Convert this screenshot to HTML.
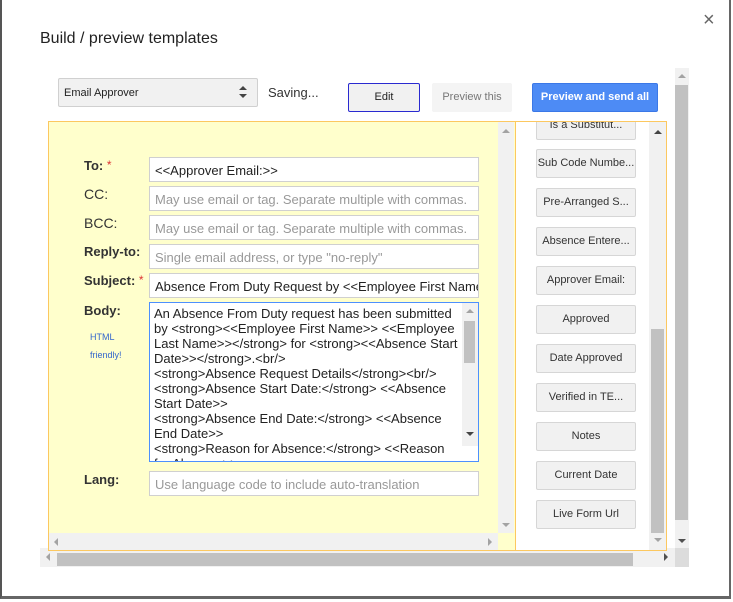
<!DOCTYPE html>
<html><head><style>
*{box-sizing:border-box;margin:0;padding:0}
body{width:733px;height:602px;background:#fff;font-family:"Liberation Sans",Arial,sans-serif;position:relative;overflow:hidden}
.abs{position:absolute}
.dlg{left:0;top:0;width:731px;height:599px;border-left:2px solid #555;border-bottom:3px solid #666;border-right:2px solid #666;background:#fff}
.lbl{position:absolute;left:84px;font-size:13px;font-weight:bold;color:#333}
.inp{position:absolute;left:149px;width:330px;height:25px;border:1px solid #d0d0d0;background:#fff;font-size:13px;color:#999;padding:5px 0 0 5px;white-space:nowrap;overflow:hidden}
.inp.v{color:#222}
.req{color:#d33;font-weight:normal;font-size:12px;vertical-align:top}
.tb{position:absolute;left:536px;width:100px;height:29px;border:1px solid #d6d6d6;background:#f1f1f1;border-radius:2px;font-size:11px;color:#333;text-align:center;line-height:27px;white-space:nowrap;overflow:hidden}
.arr{position:absolute;width:0;height:0}
</style></head><body>
<div class="abs dlg"></div>
<div class="abs" style="left:40px;top:30px;font-size:16px;color:#222">Build / preview templates</div>
<div class="abs" style="left:703px;top:9px;font-size:20px;color:#666">×</div>

<div class="abs" style="left:675px;top:68px;width:14px;height:480px;background:#f1f1f1"></div>
<div class="abs" style="left:675px;top:85px;width:13px;height:435px;background:#c1c1c1"></div>
<div class="arr" style="left:678px;top:74px;border:4px solid transparent;border-bottom:4px solid #a3a3a3;border-top:0"></div>
<div class="arr" style="left:678px;top:539px;border:4px solid transparent;border-top:4px solid #505050;border-bottom:0"></div>
<div class="abs" style="left:40px;top:548px;width:635px;height:19px;background:#f1f1f1"></div>
<div class="abs" style="left:57px;top:553px;width:576px;height:13px;background:#c1c1c1"></div>
<div class="arr" style="left:46px;top:553px;border:4px solid transparent;border-right:4px solid #a3a3a3;border-left:0"></div>
<div class="arr" style="left:664px;top:553px;border:4px solid transparent;border-left:4px solid #505050;border-right:0"></div>
<div class="abs" style="left:675px;top:548px;width:14px;height:19px;background:#dcdcdc"></div>

<div class="abs" style="left:58px;top:78px;width:200px;height:29px;background:#f1f1f1;border:1px solid #d0d0d0;border-radius:2px;font-size:11px;color:#222;padding:8px 0 0 5px">Email Approver</div>
<div class="arr" style="left:239px;top:86px;border:4px solid transparent;border-bottom:4px solid #444;border-top:0"></div>
<div class="arr" style="left:239px;top:94px;border:4px solid transparent;border-top:4px solid #444;border-bottom:0"></div>
<div class="abs" style="left:268px;top:85px;font-size:13px;color:#333">Saving...</div>
<div class="abs" style="left:348px;top:83px;width:72px;height:29px;background:#f1f1f1;border:1px solid #2a2ad0;border-radius:2px;font-size:11px;color:#222;text-align:center;line-height:27px">Edit</div>
<div class="abs" style="left:432px;top:83px;width:80px;height:29px;background:#f4f4f4;border-radius:2px;font-size:11px;color:#777;text-align:center;line-height:29px">Preview this</div>
<div class="abs" style="left:532px;top:83px;width:126px;height:29px;background:#4d8bf5;border:1px solid #3b78e7;border-radius:2px;font-size:11px;font-weight:bold;color:#fff;text-align:center;line-height:27px">Preview and send all</div>

<div class="abs" style="left:48px;top:121px;width:468px;height:430px;border:1px solid #fcc860;border-right:none;background:#ffffcc"></div>
<div class="abs" style="left:498px;top:122px;width:16px;height:411px;background:#f1f1f1"></div>
<div class="arr" style="left:502px;top:129px;border:4px solid transparent;border-bottom:4px solid #a3a3a3;border-top:0"></div>
<div class="arr" style="left:502px;top:523px;border:4px solid transparent;border-top:4px solid #a3a3a3;border-bottom:0"></div>
<div class="abs" style="left:49px;top:533px;width:449px;height:17px;background:#f1f1f1"></div>
<div class="arr" style="left:54px;top:538px;border:4px solid transparent;border-right:4px solid #a3a3a3;border-left:0"></div>
<div class="arr" style="left:488px;top:538px;border:4px solid transparent;border-left:4px solid #a3a3a3;border-right:0"></div>

<div class="lbl" style="top:158px">To: <span class="req">*</span></div>
<div class="inp v" style="top:157px">&lt;&lt;Approver Email:&gt;&gt;</div>
<div class="lbl" style="top:186px;font-weight:normal;font-size:14px">CC:</div>
<div class="inp" style="top:186px">May use email or tag. Separate multiple with commas.</div>
<div class="lbl" style="top:215px;font-weight:normal;font-size:14px">BCC:</div>
<div class="inp" style="top:215px">May use email or tag. Separate multiple with commas.</div>
<div class="lbl" style="top:244px">Reply-to:</div>
<div class="inp" style="top:244px">Single email address, or type "no-reply"</div>
<div class="lbl" style="top:273px">Subject: <span class="req">*</span></div>
<div class="inp v" style="top:273px">Absence From Duty Request by &lt;&lt;Employee First Name&gt;&gt;</div>
<div class="lbl" style="top:303px">Body:</div>
<div class="abs" style="left:90px;top:332px;font-size:9px;color:#3366cc">HTML</div>
<div class="abs" style="left:90px;top:350px;font-size:9px;color:#3366cc">friendly!</div>
<div class="abs" style="left:149px;top:302px;width:330px;height:160px;border:1px solid #4d90fe;background:#fff;overflow:hidden">
 <div style="position:absolute;left:4px;top:3px;width:305px;font-size:13px;line-height:15px;color:#222">An Absence From Duty request has been submitted by &lt;strong&gt;&lt;&lt;Employee First Name&gt;&gt; &lt;&lt;Employee Last Name&gt;&gt;&lt;/strong&gt; for &lt;strong&gt;&lt;&lt;Absence Start Date&gt;&gt;&lt;/strong&gt;.&lt;br/&gt;<br>&lt;strong&gt;Absence Request Details&lt;/strong&gt;&lt;br/&gt;<br>&lt;strong&gt;Absence Start Date:&lt;/strong&gt; &lt;&lt;Absence Start Date&gt;&gt;<br>&lt;strong&gt;Absence End Date:&lt;/strong&gt; &lt;&lt;Absence End Date&gt;&gt;<br>&lt;strong&gt;Reason for Absence:&lt;/strong&gt; &lt;&lt;Reason for Absence&gt;&gt;</div>
 <div style="position:absolute;right:0;top:0;width:16px;height:143px;background:#f1f1f1"></div>
 <div style="position:absolute;right:3px;top:18px;width:11px;height:42px;background:#c1c1c1"></div>
 <div class="arr" style="right:4px;top:6px;border:4px solid transparent;border-bottom:4px solid #a3a3a3;border-top:0"></div>
 <div class="arr" style="right:4px;top:129px;border:4px solid transparent;border-top:4px solid #444;border-bottom:0"></div>
</div>
<div class="lbl" style="top:472px">Lang:</div>
<div class="inp" style="top:471px">Use language code to include auto-translation</div>

<div class="abs" style="left:515px;top:121px;width:152px;height:430px;border:1px solid #fcc860;background:#fff;overflow:hidden">
 <div style="position:absolute;left:133px;top:0;width:17px;height:428px;background:#f1f1f1"></div>
 <div style="position:absolute;left:135px;top:207px;width:13px;height:204px;background:#c1c1c1"></div>
 <div class="arr" style="left:138px;top:8px;border:4px solid transparent;border-bottom:4px solid #444;border-top:0"></div>
 <div class="arr" style="left:138px;top:416px;border:4px solid transparent;border-top:4px solid #a3a3a3;border-bottom:0"></div>
</div>
<div class="abs" style="left:516px;top:122px;width:132px;height:427px;overflow:hidden">
<div class="tb" style="left:20px;top:-11px">Is a Substitut...</div>
<div class="tb" style="left:20px;top:27px">Sub Code Numbe...</div>
<div class="tb" style="left:20px;top:66px">Pre-Arranged S...</div>
<div class="tb" style="left:20px;top:105px">Absence Entere...</div>
<div class="tb" style="left:20px;top:144px">Approver Email:</div>
<div class="tb" style="left:20px;top:183px">Approved</div>
<div class="tb" style="left:20px;top:222px">Date Approved</div>
<div class="tb" style="left:20px;top:261px">Verified in TE...</div>
<div class="tb" style="left:20px;top:300px">Notes</div>
<div class="tb" style="left:20px;top:339px">Current Date</div>
<div class="tb" style="left:20px;top:378px">Live Form Url</div>
</div>
</body></html>
